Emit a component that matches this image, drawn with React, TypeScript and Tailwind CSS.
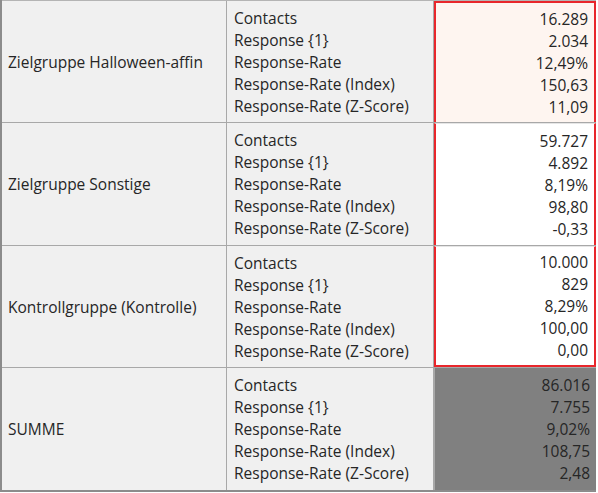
const ROWS = [
  {
    name: 'Zielgruppe Halloween-affin',
    values: ['16.289', '2.034', '12,49%', '150,63', '11,09'],
    tone: 'peach',
  },
  {
    name: 'Zielgruppe Sonstige',
    values: ['59.727', '4.892', '8,19%', '98,80', '-0,33'],
    tone: 'white',
  },
  {
    name: 'Kontrollgruppe (Kontrolle)',
    values: ['10.000', '829', '8,29%', '100,00', '0,00'],
    tone: 'white',
  },
  {
    name: 'SUMME',
    values: ['86.016', '7.755', '9,02%', '108,75', '2,48'],
    tone: 'sum',
  },
]

const METRICS = [
  'Contacts',
  'Response {1}',
  'Response-Rate',
  'Response-Rate (Index)',
  'Response-Rate (Z-Score)',
]

function valueCellClass(index: number, tone: string) {
  if (tone === 'sum') return 'bg-[#808080] border-l border-[#a8a8a8]'
  const bg = tone === 'peach' ? 'bg-[#fef5f0]' : 'bg-white'
  const top = index === 0 ? 'border-t-2 border-t-[#e8262b]' : 'border-t border-t-[#e6e6e6]'
  const bottom = index === 2 ? 'border-b-2 border-b-[#e8262b]' : ''
  return `${bg} border-x-2 border-x-[#e8262b] ${top} ${bottom}`
}

export default function App() {
  return (
    <div className="h-[493px] w-[598px] bg-white font-['Open_Sans',sans-serif] text-[15.5px] leading-[22px] text-[#262626]">
      <div className="flex w-[596px] flex-col border-b-2 border-l-2 border-b-[#8c8c8c] border-l-[#8c8c8c]">
        {ROWS.map((row, i) => (
          <div
            key={row.name}
            className={`flex ${i < 2 ? 'h-[123px]' : 'h-[122px]'} ${i === 3 ? '' : 'border-b border-[#a8a8a8]'} ${i === 0 ? 'border-t border-t-[#b4b4b4]' : ''}`}
          >
            <div className="flex w-[225px] items-center border-r border-[#a8a8a8] bg-[#f0f0f0] pl-[6px]">
              {row.name}
            </div>
            <div className="flex w-[207px] flex-col justify-center border-r border-[#a8a8a8] bg-[#f0f0f0] pl-[7px]">
              {METRICS.map((m) => (
                <div key={m}>{m}</div>
              ))}
            </div>
            <div
              className={`flex flex-1 flex-col justify-center pr-[6px] text-right ${valueCellClass(i, row.tone)}`}
            >
              {row.values.map((v, k) => (
                <div key={k}>{v}</div>
              ))}
            </div>
          </div>
        ))}
      </div>
    </div>
  )
}
